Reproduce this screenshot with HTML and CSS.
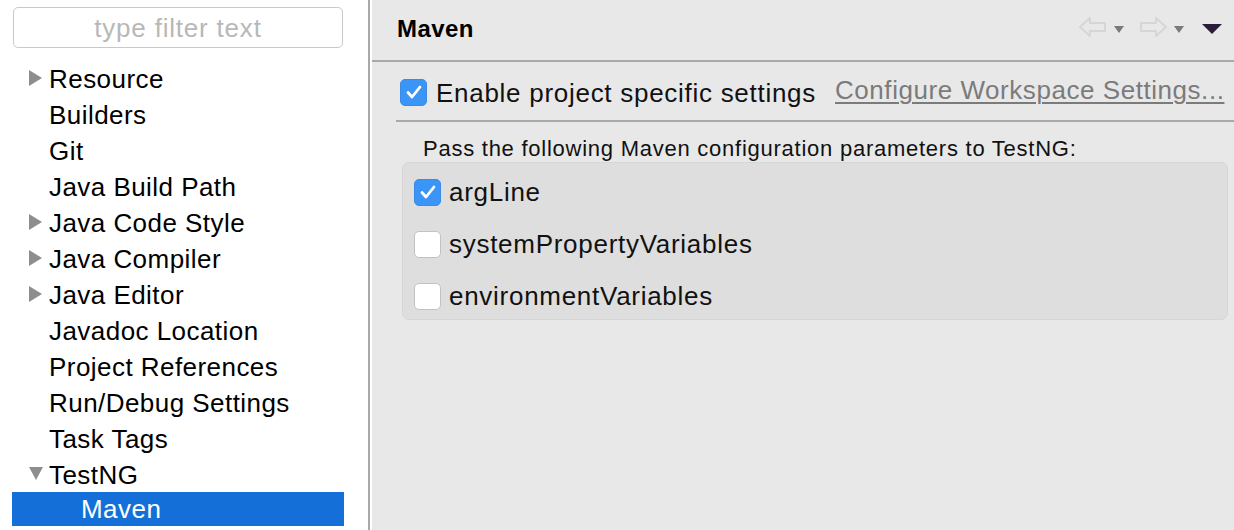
FILE: index.html
```html
<!DOCTYPE html>
<html>
<head>
<meta charset="utf-8">
<link rel="stylesheet" href="styles.css">
</head>
<body>
<div class="app">
  <aside class="sidebar">
    <div class="filter"><span class="placeholder">type filter text</span></div>
    <ul class="tree">
      <li class="item"><span class="tw closed"></span>Resource</li>
      <li class="item"><span class="tw"></span>Builders</li>
      <li class="item"><span class="tw"></span>Git</li>
      <li class="item"><span class="tw"></span>Java Build Path</li>
      <li class="item"><span class="tw closed"></span>Java Code Style</li>
      <li class="item"><span class="tw closed"></span>Java Compiler</li>
      <li class="item"><span class="tw closed"></span>Java Editor</li>
      <li class="item"><span class="tw"></span>Javadoc Location</li>
      <li class="item"><span class="tw"></span>Project References</li>
      <li class="item"><span class="tw"></span>Run/Debug Settings</li>
      <li class="item"><span class="tw"></span>Task Tags</li>
      <li class="item"><span class="tw open"></span>TestNG</li>
      <li class="item child selected">Maven</li>
    </ul>
  </aside>
  <div class="divider"></div>
  <main class="main">
    <header class="header">
      <h1 class="title">Maven</h1>
      <div class="nav">
        <svg class="arrow" width="30" height="24" viewBox="0 0 30 24"><path d="M2 12 L12 3 L12 8 L27 8 L27 16 L12 16 L12 21 Z" fill="none" stroke="#d6d6d6" stroke-width="2" stroke-linejoin="round"/></svg>
        <span class="dd"></span>
        <svg class="arrow" width="30" height="24" viewBox="0 0 30 24"><path d="M28 12 L18 3 L18 8 L3 8 L3 16 L18 16 L18 21 Z" fill="none" stroke="#d6d6d6" stroke-width="2" stroke-linejoin="round"/></svg>
        <span class="dd"></span>
        <span class="menu"></span>
      </div>
    </header>
    <section class="content">
      <div class="top-row">
        <label class="check-row">
          <span class="cb checked"><svg width="18" height="16" viewBox="0 0 18 16"><path d="M3 8.5 L7 13 L15 3" fill="none" stroke="#fff" stroke-width="2.8" stroke-linecap="round" stroke-linejoin="round"/></svg></span>
          <span class="lbl">Enable project specific settings</span>
        </label>
        <a class="link">Configure Workspace Settings...</a>
      </div>
      <div class="sep"></div>
      <p class="caption">Pass the following Maven configuration parameters to TestNG:</p>
      <div class="group">
        <label class="check-row opt">
          <span class="cb checked"><svg width="18" height="16" viewBox="0 0 18 16"><path d="M3 8.5 L7 13 L15 3" fill="none" stroke="#fff" stroke-width="2.8" stroke-linecap="round" stroke-linejoin="round"/></svg></span>
          <span class="lbl">argLine</span>
        </label>
        <label class="check-row opt">
          <span class="cb"></span>
          <span class="lbl">systemPropertyVariables</span>
        </label>
        <label class="check-row opt">
          <span class="cb"></span>
          <span class="lbl">environmentVariables</span>
        </label>
      </div>
    </section>
  </main>
</div>
</body>
</html>
```

FILE: styles.css
```css
* { box-sizing: border-box; }
html, body { margin: 0; padding: 0; }
body {
  width: 1234px;
  height: 530px;
  overflow: hidden;
  font-family: "Liberation Sans", Arial, sans-serif;
  color: #111;
  background: #e8e8e8;
}
.app {
  display: flex;
  height: 530px;
}
.sidebar {
  width: 368px;
  flex: none;
  background: #fff;
  padding: 7px 0 0 12px;
}
.filter {
  margin-left: 1px;
  width: 330px;
  height: 41px;
  border: 1px solid #c9c9c9;
  border-radius: 5px;
  display: flex;
  align-items: center;
  justify-content: center;
}
.placeholder {
  color: #b8b8b8;
  font-size: 26px;
  letter-spacing: 0.8px;
  margin-top: 1px;
}
.tree {
  list-style: none;
  margin: 13px 0 0 0;
  padding: 0;
  width: 332px;
}
.item {
  height: 36px;
  display: flex;
  align-items: center;
  font-size: 26px;
  letter-spacing: 0.45px;
  color: #000;
  padding-left: 17px;
}
.tw {
  width: 20px;
  height: 16px;
  flex: none;
  position: relative;
}
.tw.closed::before {
  content: "";
  position: absolute;
  left: 0;
  top: -1px;
  border-left: 13px solid #8e8e8e;
  border-top: 8px solid transparent;
  border-bottom: 8px solid transparent;
}
.tw.open::before {
  content: "";
  position: absolute;
  left: 0;
  top: 0;
  border-top: 13px solid #8e8e8e;
  border-left: 7.5px solid transparent;
  border-right: 7.5px solid transparent;
}
.item.child {
  padding-left: 69px;
}
.item.selected {
  background: #1470d8;
  color: #fff;
  height: 34px;
  margin-top: -1px;
}
.divider {
  width: 4px;
  flex: none;
  border-left: 2px solid #a9a9a9;
  background: #fff;
}
.main {
  flex: 1;
  display: flex;
  flex-direction: column;
  background: #e8e8e8;
}
.header {
  height: 62px;
  flex: none;
  border-bottom: 2px solid #a9a9a9;
  display: flex;
  align-items: center;
  justify-content: space-between;
  padding: 0 12px 2px 25px;
}
.title {
  margin: 0;
  font-size: 24px;
  font-weight: bold;
  color: #000;
  letter-spacing: 0.4px;
}
.nav {
  display: flex;
  align-items: center;
  margin-top: -4px;
}
.arrow { display: block; }
.dd {
  width: 0;
  height: 0;
  border-top: 7px solid #7a7a7a;
  border-left: 5px solid transparent;
  border-right: 5px solid transparent;
  margin: 4px 14px 0 6px;
}
.menu {
  width: 0;
  height: 0;
  border-top: 10px solid #2a1c3a;
  border-left: 10px solid transparent;
  border-right: 10px solid transparent;
  margin: 3px 0 0 4px;
}
.content {
  padding: 15px 0 0 24px;
}
.top-row {
  display: flex;
  align-items: center;
  height: 30px;
  margin-left: 4px;
}
.check-row {
  display: flex;
  align-items: center;
}
.cb {
  width: 27px;
  height: 27px;
  flex: none;
  border-radius: 5px;
  background: #fff;
  border: 1px solid #c2c2c2;
  display: flex;
  align-items: center;
  justify-content: center;
}
.cb.checked {
  background: #3b95f6;
  border-color: #3b8ae6;
}
.lbl {
  font-size: 26px;
  color: #111;
  margin-left: 9px;
  letter-spacing: 0.72px;
  margin-top: 2px;
}
.link {
  margin-left: 19px;
  font-size: 26px;
  color: #7b7b7b;
  text-decoration: underline;
  text-decoration-thickness: 2px;
  text-underline-offset: 3px;
  letter-spacing: 0.55px;
  margin-top: -3px;
}
.sep {
  height: 2px;
  background: #a9a9a9;
  margin-top: 13px;
}
.caption {
  margin: 14px 0 0 27px;
  font-size: 22px;
  color: #111;
  letter-spacing: 0.75px;
  line-height: 25px;
}
.group {
  margin: 1px 6px 0 6px;
  height: 158px;
  background: #dedede;
  border: 1px solid #d6d6d6;
  border-radius: 7px;
  padding: 3px 0 0 11px;
  display: flex;
  flex-direction: column;
}
.opt {
  height: 52px;
  flex: none;
}
.opt .lbl {
  margin-left: 8px;
  margin-top: 0;
}
```
